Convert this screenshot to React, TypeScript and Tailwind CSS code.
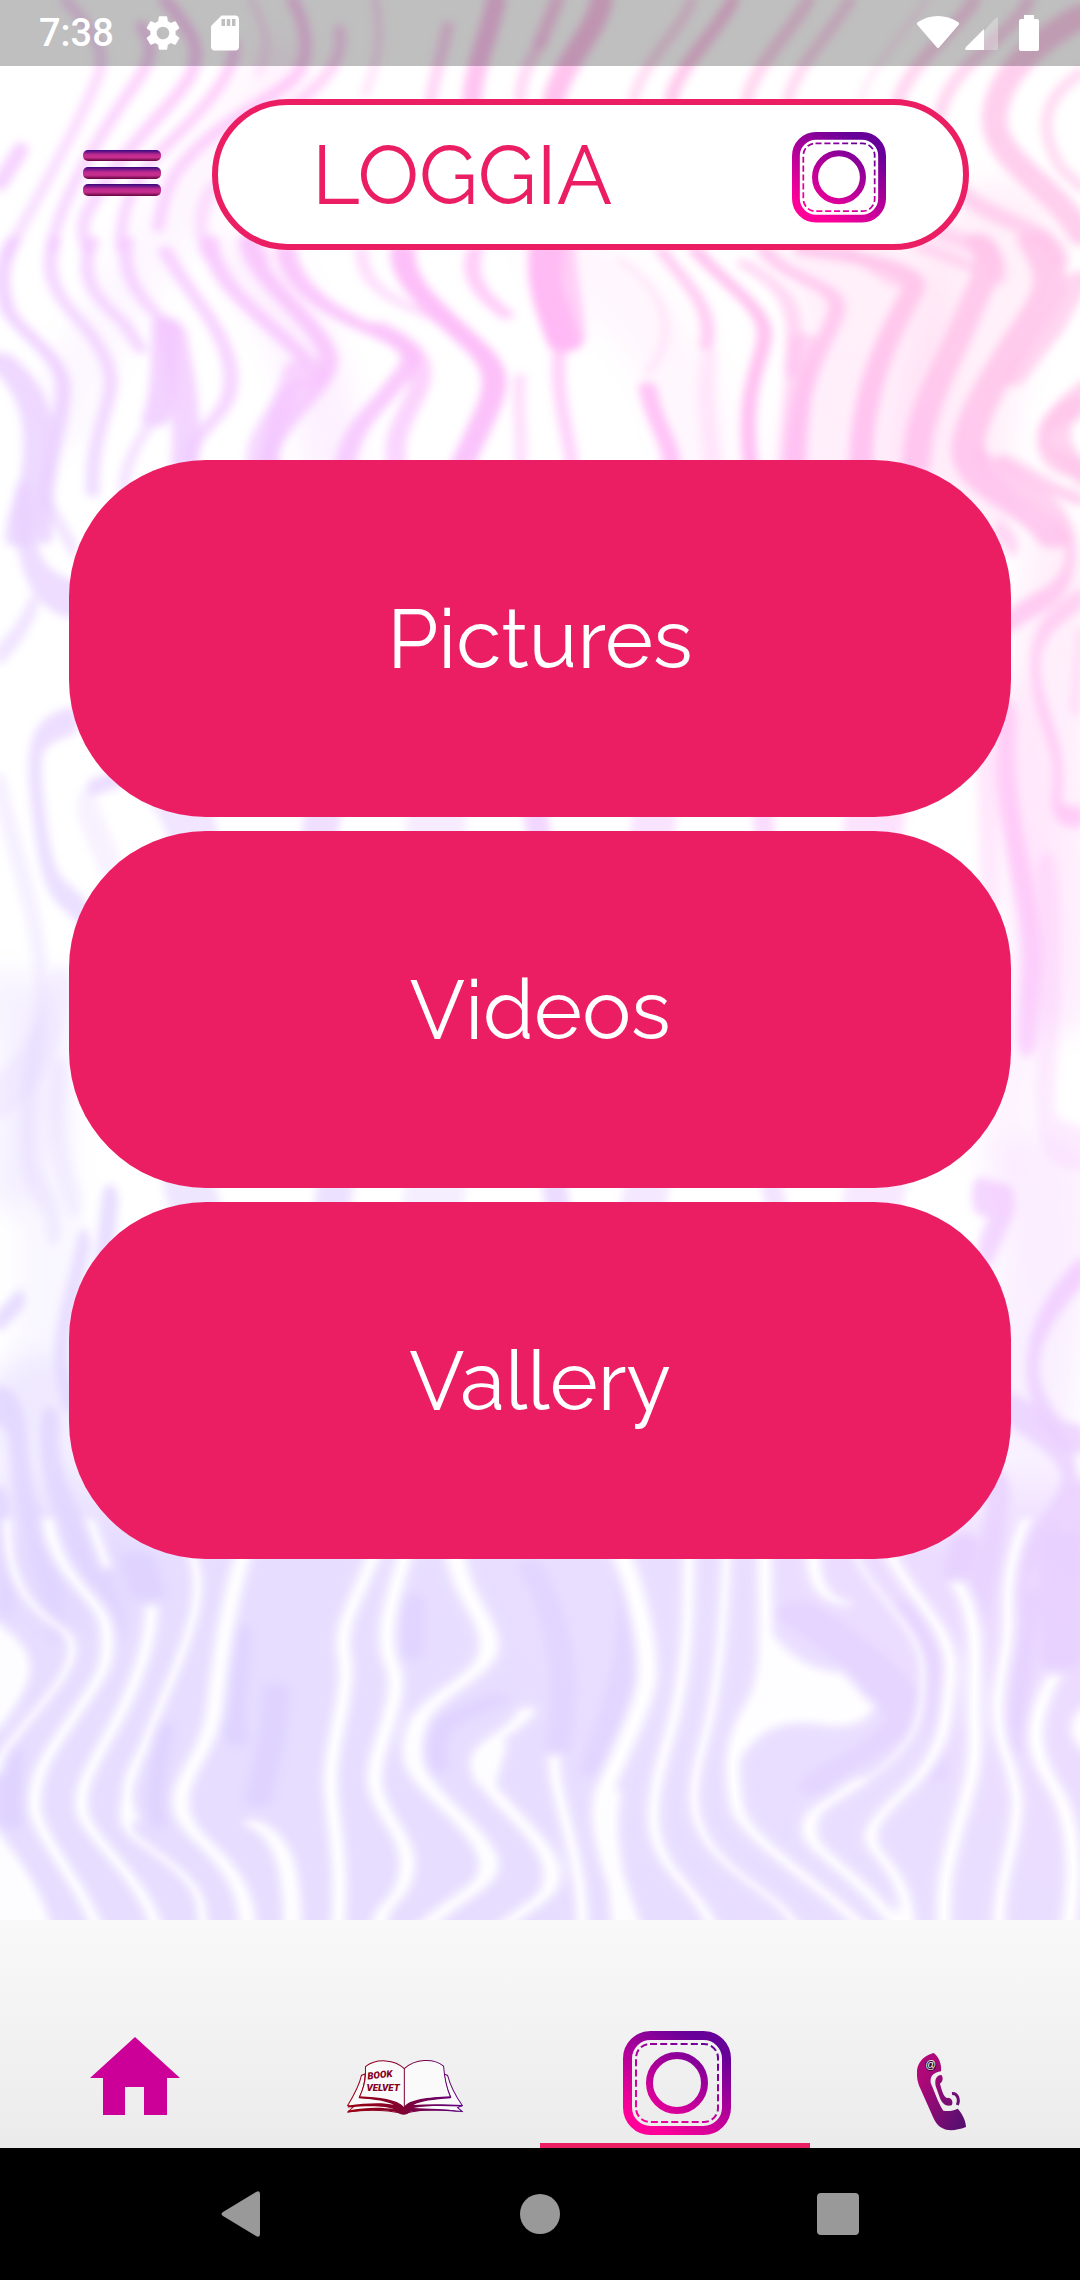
import React from "react";
import { MdSdCard, MdSettings } from "react-icons/md";

type Band = [d: string, width: number, opacity?: number];

const washes: Band[] = [
  ["M250 260 C300 320 330 400 330 460", 60, 0.25],
  ["M280 70 C230 170 120 260 60 420", 60, 0.15],
  ["M560 250 C640 300 700 380 700 470", 70, 0.12],
  ["M850 230 C900 330 870 400 850 470", 150, 0.25],
  ["M1000 240 C980 330 940 400 960 500", 120, 0.25],
  ["M1060 560 C1040 700 1060 860 1060 1000", 70, 0.25],
  ["M1010 700 C1030 850 1040 1000 1000 1150", 50, 0.2],
  ["M1040 1180 C1060 1300 1000 1400 1040 1560", 90, 0.3],
  ["M10 1000 C40 1060 30 1120 10 1180", 60, 0.3],
  ["M60 1000 C20 1160 80 1280 30 1400", 60, 0.2],
  ["M40 1420 C70 1460 60 1500 80 1560", 130, 0.4],
];

const topLeft: Band[] = [
  ["M190 0 C240 60 310 130 290 210 S130 560 20 760", 32, 0.6],
  ["M410 80 C450 130 440 180 400 240 S180 560 150 740", 34, 0.7],
  ["M480 0 C540 80 590 130 560 210 S400 400 310 540 S240 680 250 740", 38, 0.7],
  ["M680 130 C690 220 580 340 480 440 S350 640 350 740", 34, 0.7],
  ["M850 0 C890 80 900 150 870 210 S700 330 600 420 S480 560 460 680", 36, 0.7],
  ["M985 90 C1000 170 960 230 850 320", 34, 0.6],
  ["M730 0 C770 80 790 140 750 220", 24, 0.35],
  ["M1090 0 C1110 100 1100 180 1060 280", 26, 0.4],
  ["M1300 80 C1280 180 1260 240 1250 300", 34, 0.65],
  ["M1440 0 C1430 80 1380 180 1370 300", 56, 0.9],
  ["M1568 130 C1530 200 1510 240 1510 300", 34, 0.6],
  ["M0 550 L60 450", 46, 0.8],
  ["M620 560 C570 640 580 700 600 760", 40, 0.5],
  ["M730 690 L770 780", 30, 0.5],
];

const topRight: Band[] = [
  ["M50 0 L0 130", 40, 0.8],
  ["M180 0 C160 100 70 180 40 300", 64, 0.95],
  ["M440 0 C420 80 300 180 270 300", 30, 0.6],
  ["M560 0 C520 90 400 200 380 300", 38, 0.9],
  ["M780 0 C740 80 620 200 600 300", 36, 0.7],
  ["M900 0 C860 80 740 200 720 300", 32, 0.65],
  ["M1120 0 C1060 100 960 200 930 300", 16, 0.4],
  ["M1260 0 C1220 80 1080 180 1040 300", 38, 0.7],
  ["M1420 0 C1380 100 1180 200 1160 350", 36, 0.7],
  ["M1568 50 C1450 120 1330 220 1320 350 S1500 560 1568 700", 74, 0.8],
  ["M1568 220 C1500 270 1450 330 1480 430 S1540 520 1568 560", 34, 0.6],
  ["M1230 580 C1300 660 1500 690 1510 780", 50, 0.7],
  ["M1150 690 C1250 740 1340 750 1330 830", 50, 0.6],
];

const upper: Band[] = [
  ["M20 0 C0 80 0 130 10 200 S90 340 92 440 S60 700 65 900", 22, 0.85],
  ["M0 360 C50 450 60 540 55 660 S30 800 30 900", 44, 0.8],
  ["M80 0 C65 80 75 150 110 230 S165 380 160 450 S130 620 135 760", 20, 0.75],
  ["M135 0 C115 100 130 160 180 250 L205 330", 20, 0.75],
  ["M185 0 C175 100 200 170 240 250", 20, 0.75],
  ["M240 250 C240 340 240 480 225 540", 40, 0.85],
  ["M250 270 C262 400 275 520 268 680", 40, 0.8],
  ["M240 30 C260 130 330 260 335 400 S285 540 275 660", 22, 0.75],
  ["M215 560 C190 640 180 690 180 760", 16, 0.6],
  ["M305 0 C310 130 370 210 430 330 S440 400 420 460 S390 600 395 680", 26, 0.8],
  ["M360 0 C370 130 460 240 475 340 S400 520 385 680", 28, 0.85],
  ["M430 380 C410 540 370 560 375 680", 34, 0.7],
  ["M415 30 C420 120 460 200 540 270 S600 360 570 440 S510 560 500 680", 30, 0.85],
  ["M550 260 C620 330 620 400 600 480 S570 600 575 680", 30, 0.7],
  ["M525 30 C525 130 560 180 640 240", 20, 0.5],
  ["M585 30 C580 130 640 220 690 320 S715 470 670 680", 36, 0.95],
  ["M690 30 C675 110 700 170 735 225", 24, 0.7],
  ["M795 0 C785 120 800 200 820 310", 50, 1],
  ["M825 0 C825 120 840 200 840 300", 20, 0.7],
  ["M815 300 C800 450 830 600 830 680", 20, 0.65],
  ["M755 410 C750 500 760 600 755 680", 18, 0.5],
  ["M900 60 C980 180 980 300 940 400", 14, 0.3],
  ["M940 440 C950 560 975 600 975 680", 26, 0.85],
  ["M960 30 C990 120 1040 200 1025 320", 20, 0.75],
  ["M1030 340 C1020 460 1030 560 1035 680", 26, 0.3],
  ["M1010 30 C1050 130 1110 200 1110 280 S1075 430 1090 680", 22, 0.95],
  ["M1080 70 C1150 160 1160 200 1150 400", 24, 0.6],
  ["M1110 30 C1140 120 1215 130 1215 200 S1150 400 1155 680", 26, 0.8],
  ["M1165 300 L1150 680", 40, 0.6],
  ["M1170 30 C1240 50 1340 80 1325 150 S1250 400 1250 680", 34, 0.9],
  ["M1230 30 L1300 130", 22, 0.6],
  ["M1420 0 C1450 60 1430 100 1400 250 S1330 520 1330 680", 40, 0.85],
  ["M1340 20 L1410 80", 30, 0.6],
  ["M1500 0 C1530 100 1530 130 1510 200 S1400 520 1405 640 S1500 800 1530 900", 48, 0.85],
  ["M1568 110 L1530 260 L1470 420", 34, 0.7],
  ["M1600 420 C1510 540 1510 640 1600 720", 44, 0.75],
  ["M1455 660 C1500 740 1540 760 1568 780", 20, 0.5],
];

const leftEdge: Band[] = [
  ["M70 0 C70 90 120 130 210 140", 56, 0.75],
  ["M140 0 L220 70", 26, 0.6],
  ["M100 150 C60 190 40 200 0 220", 30, 0.6],
  ["M215 315 C100 330 90 350 120 460 S180 550 250 590", 40, 0.75],
  ["M370 395 L275 410", 24, 0.8],
  ["M260 440 L330 520", 60, 0.3],
  ["M0 410 C40 500 100 570 120 660 S80 800 80 900 S160 980 160 1040", 44, 0.35],
  ["M0 850 C60 830 150 780 180 700", 70, 0.3],
  ["M180 820 C160 900 190 960 220 1000", 50, 0.3],
  ["M0 1170 L60 1140", 30, 0.8],
  ["M330 1000 L310 1090", 50, 0.8],
  ["M250 1060 C220 1150 150 1200 205 1280", 42, 0.75],
  ["M0 1290 C80 1300 40 1380 90 1450 S150 1540 170 1600", 56, 0.8],
  ["M150 1320 C130 1400 240 1480 350 1600", 56, 0.8],
  ["M0 1430 L20 1568", 50, 0.8],
];

const rightEdge: Band[] = [
  ["M0 70 C40 110 260 120 270 190 S160 260 90 290", 30, 0.75],
  ["M60 80 C150 90 220 120 300 130", 20, 0.6],
  ["M300 10 C200 20 160 50 200 70 S280 80 300 100", 30, 0.7],
  ["M60 170 L100 190", 30, 0.6],
  ["M300 260 C200 290 150 310 170 370 S250 450 230 520 Q220 545 300 545", 28, 0.65],
  ["M300 310 L285 400", 30, 0.4],
  ["M80 420 C60 560 160 640 155 740 L140 830", 58, 0.65],
  ["M20 480 L30 640", 60, 0.3],
  ["M200 620 C240 760 180 900 200 940 S260 970 300 980", 60, 0.3],
  ["M0 1040 L80 1050 L20 1110", 50, 0.75],
  ["M300 1140 C190 1190 120 1250 180 1310 S280 1350 300 1360", 38, 0.8],
  ["M100 1320 C200 1350 310 1380 250 1440 S110 1500 110 1568", 46, 0.8],
  ["M20 1410 L60 1430 L0 1568", 60, 0.8],
  ["M300 1440 L260 1568", 60, 0.8],
];

const gaps: Band[] = [
  ["M160 780 C220 830 180 900 210 960 S150 1100 200 1220", 50, 0.6],
  ["M330 790 C290 900 370 1000 330 1220", 36, 0.7],
  ["M440 790 C420 900 470 1000 430 1220", 60, 0.4],
  ["M530 790 C560 900 520 1000 560 1220", 24, 0.8],
  ["M660 790 C630 900 690 1000 640 1220", 44, 0.5],
  ["M760 790 C780 900 720 1000 780 1220", 20, 0.6],
  ["M880 790 C850 900 910 1000 870 1220", 60, 0.45],
];

const shades: Band[] = [
  ["M345 270 C350 400 330 500 345 600", 36],
  ["M400 450 C400 600 380 720 375 780", 40],
  ["M600 180 L600 340", 34],
  ["M720 480 C640 540 620 580 632 680", 40],
  ["M770 80 C830 300 820 500 810 620", 36],
  ["M910 100 C930 350 880 560 860 690", 36],
  ["M240 560 C230 700 220 760 230 850", 26],
  ["M15 640 L15 850", 36],
  ["M200 60 L215 160", 50],
  ["M1180 740 C1190 700 1270 640 1310 540", 44],
  ["M1160 220 C1220 300 1280 400 1310 500", 70],
  ["M1310 200 C1380 400 1360 620 1360 710", 30],
  ["M1540 0 L1540 360", 60],
  ["M1500 160 L1470 640", 24],
  ["M1400 0 L1390 110", 40],
];

const whites: Band[] = [
  ["M10 -60 C10 120 40 200 85 260 S90 420 50 520 S0 640 -5 700", 22],
  ["M70 -60 C80 120 150 170 155 270 S150 400 110 520 S50 700 50 790 S110 1000 145 1180", 30],
  ["M130 -60 L155 80", 24],
  ["M220 200 C220 300 200 420 170 540 S110 740 120 820 S220 1040 228 1180", 30],
  ["M210 620 C180 720 180 780 195 840", 26],
  ["M275 20 C300 140 280 250 260 360 S200 640 185 760 S190 880 240 960 S295 1080 295 1180", 24],
  ["M355 30 C330 200 320 350 312 500 S250 720 265 820 S360 960 360 1180", 36],
  ["M368 850 C410 890 425 980 425 1180", 38],
  ["M545 30 C520 180 490 250 500 350 S480 600 480 720 S500 940 490 1180", 32],
  ["M590 30 C570 180 550 280 570 380 S535 640 545 740 S600 900 590 1000 S550 1080 550 1180", 34],
  ["M660 30 C670 180 710 230 710 320 S620 460 605 560 S600 700 650 800 S720 960 705 1010 S640 1100 610 1180", 40],
  ["M765 510 C750 580 690 600 695 680 S790 880 800 980 S770 1080 720 1180", 36],
  ["M718 620 L704 720", 46],
  ["M805 650 C800 760 850 960 845 1180", 28],
  ["M900 30 C930 180 940 320 940 400 S900 640 880 740 S890 1000 920 1180", 40],
  ["M890 760 C875 900 900 1000 900 1180", 36],
  ["M1000 30 C1000 200 1000 400 970 600 S940 900 980 1000 S1020 1100 1040 1180", 28],
  ["M1055 30 C1050 300 1040 480 1020 620 S1000 860 1050 960 S1140 1080 1160 1180", 24],
  ["M1110 30 C1110 300 1120 400 1090 500 S1060 700 1070 800 S1200 1040 1260 1180", 32],
  ["M1180 30 C1180 140 1200 180 1225 190", 32],
  ["M1240 30 C1260 160 1340 260 1340 400 S1330 620 1250 730", 16],
  ["M1250 720 C1200 800 1175 800 1175 870 S1240 980 1310 1180", 34],
  ["M1290 30 C1320 180 1385 260 1380 400 S1370 640 1320 740 S1250 880 1275 940 S1320 1060 1320 1180", 30],
  ["M1390 130 C1430 260 1410 420 1415 560 S1400 780 1385 900 S1370 1040 1370 1180", 32],
  ["M1490 -60 C1450 120 1470 220 1460 330 S1440 520 1460 640 S1480 800 1470 900 S1450 1050 1450 1180", 28],
  ["M1530 410 C1490 560 1500 640 1530 740 S1565 1000 1550 1180", 34],
];

function Bands({ items, transform, stroke }: { items: Band[]; transform?: string; stroke: string }) {
  return (
    <g transform={transform} fill="none" stroke={stroke} strokeLinecap="round" strokeLinejoin="round">
      {items.map(([d, width, opacity = 1]) => (
        <path key={d} d={d} strokeWidth={width} opacity={opacity} />
      ))}
    </g>
  );
}

/* The bands are drawn in several local grids; one page-wide gradient tints them all through a mask. */
function MarbleBackground() {
  return (
    <svg
      className="absolute inset-0 h-full w-full"
      viewBox="0 0 1080 1920"
      preserveAspectRatio="xMidYMin slice"
      aria-hidden="true"
    >
      <defs>
        <linearGradient id="tint" gradientUnits="userSpaceOnUse" x1="100" y1="1500" x2="1100" y2="500">
          <stop offset="0" stopColor="#e0d4ff" />
          <stop offset="0.25" stopColor="#e4d6ff" />
          <stop offset="0.5" stopColor="#ead0ff" />
          <stop offset="0.65" stopColor="#f6c6ff" />
          <stop offset="0.8" stopColor="#ffb9f6" />
          <stop offset="1" stopColor="#ffc4ea" />
        </linearGradient>
        <linearGradient id="fadeIn" x1="0" y1="0" x2="0" y2="1">
          <stop offset="0" stopColor="#fff" stopOpacity="0" />
          <stop offset="0.2" stopColor="#fff" stopOpacity="0.8" />
          <stop offset="1" stopColor="#fff" stopOpacity="0.8" />
        </linearGradient>
        <filter id="soft" filterUnits="userSpaceOnUse" x="-20" y="-20" width="1120" height="1980">
          <feGaussianBlur stdDeviation="4" />
        </filter>
        <filter id="softer" filterUnits="userSpaceOnUse" x="-20" y="-20" width="1120" height="1980">
          <feGaussianBlur stdDeviation="14" />
        </filter>
        <mask id="marble" maskUnits="userSpaceOnUse" x="-20" y="-20" width="1120" height="1980">
          <g filter="url(#softer)">
            <Bands items={washes} stroke="#fff" />
          </g>
          <g filter="url(#soft)">
            <Bands items={topLeft} stroke="#fff" transform="scale(0.3444 0.3333)" />
            <Bands items={topRight} stroke="#fff" transform="translate(540 0) scale(0.3444 0.3333)" />
            <Bands items={upper} stroke="#fff" transform="translate(0 240) scale(0.6888 0.3333)" />
            <Bands items={gaps} stroke="#fff" />
            <Bands items={leftEdge} stroke="#fff" transform="translate(0 500) scale(0.3333 0.7015)" />
            <Bands items={rightEdge} stroke="#fff" transform="translate(980 400) scale(0.3333 0.7653)" />
            <rect x="-20" y="1460" width="1120" height="480" fill="url(#fadeIn)" />
            <Bands items={shades} stroke="#fff" transform="translate(0 1540) scale(0.6888 0.3333)" />
            <g transform="translate(0 1540) scale(0.6888 0.3333)">
              <Bands items={whites} stroke="#0c0c0c" />
              <path
                fill="#0c0c0c"
                d="M-30 200 L0 240 C60 330 70 400 0 580 L-30 580Z M-30 800 L0 860 C30 950 70 1040 85 1200 L-30 1200Z M1120 260 C1150 340 1180 380 1220 385 C1240 400 1250 460 1275 490 C1270 560 1230 580 1190 565 C1140 550 1110 570 1080 660 L1085 480 C1120 400 1110 320 1120 260Z M1600 460 C1535 500 1530 620 1600 680Z"
              />
            </g>
          </g>
        </mask>
      </defs>
      <rect width="1080" height="1920" fill="#fff" />
      <rect width="1080" height="1920" fill="url(#tint)" mask="url(#marble)" />
    </svg>
  );
}

function CameraIcon({ id, className }: { id: string; className: string }) {
  const paint = `url(#${id})`;
  return (
    <svg viewBox="0 0 108 104" className={className} fill="none" aria-hidden="true">
      <defs>
        <linearGradient id={id} gradientUnits="userSpaceOnUse" x1="30" y1="96" x2="82" y2="12">
          <stop offset="0" stopColor="#ff0099" />
          <stop offset="1" stopColor="#660099" />
        </linearGradient>
      </defs>
      <rect x="4.5" y="4.5" width="99" height="95" rx="23" stroke={paint} strokeWidth="9" />
      <rect x="13" y="13" width="82" height="78" rx="14" stroke={paint} strokeWidth="2" strokeDasharray="7 3.2" />
      <circle cx="54" cy="52" r="27.5" stroke={paint} strokeWidth="7" />
    </svg>
  );
}

function MenuIcon() {
  return (
    <svg viewBox="0 0 78 46" className="w-[78px]" aria-hidden="true">
      <defs>
        <linearGradient id="bar" x1="0.48" y1="0" x2="0.52" y2="1" gradientTransform="rotate(3)">
          <stop offset="0" stopColor="#3d0a80" />
          <stop offset="0.4" stopColor="#c02a90" />
          <stop offset="0.65" stopColor="#c8308f" />
          <stop offset="1" stopColor="#5a0038" />
        </linearGradient>
      </defs>
      <rect y="0" width="78" height="11" rx="5" fill="url(#bar)" />
      <rect y="17" width="78" height="12" rx="5" fill="url(#bar)" />
      <rect y="34" width="78" height="12" rx="5" fill="url(#bar)" />
    </svg>
  );
}

function HomeIcon() {
  return (
    <svg viewBox="0 0 90 78" className="w-[90px]" aria-hidden="true">
      <path fill="#cc0099" d="M45 0 L90 41 H77 V78 H54 V50 H35 V78 H13 V41 H0Z" />
    </svg>
  );
}

function BookIcon() {
  return (
    <svg viewBox="52 94 346 164" className="w-[116px]" fill="none" stroke="url(#ink)" strokeWidth="3" aria-hidden="true">
      <defs>
        <linearGradient id="ink" gradientUnits="userSpaceOnUse" x1="60" y1="0" x2="398" y2="0">
          <stop offset="0" stopColor="#990011" />
          <stop offset="0.4" stopColor="#85002a" />
          <stop offset="1" stopColor="#5c0085" />
        </linearGradient>
      </defs>
      <path
        fill="#fafafa"
        d="M105 136 L95 140 C90 165 75 195 54 230 L70 235 L54 249 C120 240 180 245 222 254 C270 240 330 240 396 248 L382 236 L396 230 C375 200 360 170 352 140 L342 136 C345 165 352 185 361 205 C310 206 250 212 223 240 C195 215 150 208 89 206 C100 185 105 160 106 136Z"
      />
      <path
        fill="#fafafa"
        d="M223 120 C195 92 140 88 107 114 V140 C106 165 98 185 89 205 C150 208 195 215 223 245 C250 212 310 206 361 205 C350 180 343 150 340 112 C310 88 255 90 223 120Z"
      />
      <path d="M223 120 V240" />
      <path
        fill="url(#ink)"
        stroke="none"
        d="M88 202 C150 206 200 210 222 234 C240 210 290 206 361 202 L361 208 C310 212 270 216 250 228 C300 224 350 226 396 228 L396 233 C340 231 290 230 250 237 C290 239 350 239 397 249 C340 245 280 244 242 248 C232 260 212 260 202 250 C160 241 110 243 54 251 L56 245 C110 234 160 235 192 241 C170 230 110 230 54 236 L56 230 C110 222 160 220 192 228 C170 216 140 212 88 208Z"
      />
      <g fill="#85001f" stroke="none" fontFamily="Roboto, sans-serif" fontWeight="900" fontStyle="italic">
        <text x="114" y="152" fontSize="29" transform="rotate(-6 114 152)">BOOK</text>
        <text x="110" y="188" fontSize="29">VELVET</text>
      </g>
    </svg>
  );
}

function PhoneIcon() {
  return (
    <svg viewBox="951 126 147 234" className="w-[49px]" aria-hidden="true">
      <defs>
        <linearGradient id="phone" gradientUnits="userSpaceOnUse" x1="955" y1="220" x2="1098" y2="300">
          <stop offset="0" stopColor="#b00878" />
          <stop offset="1" stopColor="#5a0f70" />
        </linearGradient>
      </defs>
      <path
        fill="url(#phone)"
        d="M1001 126 C985 130 951 145 951 185 C950 205 955 220 962 235 L1000 320 C1015 355 1045 368 1098 348 C1098 335 1090 310 1073 293 C1060 300 1045 301 1030 299 C1020 285 1010 260 992 215 C990 195 1000 185 1023 181 C1026 160 1015 135 1001 126Z"
      />
      <path
        fill="url(#phone)"
        d="M1018 193 C1005 198 1004 215 1008 228 L1020 262 C1028 280 1040 288 1055 283 C1060 275 1057 262 1045 260 C1036 264 1028 250 1020 218 C1030 212 1030 198 1024 192Z"
      />
      <path fill="none" stroke="url(#phone)" strokeWidth="9" d="M1056 248 C1070 246 1080 262 1072 282" />
      <circle cx="992" cy="163" r="17" fill="#3a0a30" />
      <text
        x="992"
        y="172"
        textAnchor="middle"
        fill="#fff"
        fontSize="32"
        fontFamily="'Liberation Sans', sans-serif"
      >
        @
      </text>
    </svg>
  );
}

function StatusBar() {
  return (
    <div className="flex h-[66px] items-center justify-between bg-black/25 pr-[41px] pl-[39px] text-white">
      <div className="flex items-center">
        <time className="font-['Roboto',sans-serif] text-[38px] leading-none font-medium">7:38</time>
        <MdSettings className="ml-7 size-[42px]" />
        <MdSdCard className="ml-5 size-[42px]" />
      </div>
      <svg viewBox="0 0 122 36" className="w-[122px]" fill="currentColor" aria-hidden="true">
        <path d="M1 7 C13 -1 29 -1 41 7 Q43 8 41.5 10 L22.5 32 Q21 34 19.5 32 L0.5 10 Q-1 8 1 7Z" />
        <path opacity="0.3" d="M67 16 L77.5 4 Q81 0.5 81 4 V33 Q81 35 79 35 H67Z" />
        <path d="M67 14 V35 H50 Q46.5 35 49 32Z" />
        <path d="M107 0 H117 V4 H120 Q122 4 122 6 V34 Q122 36 120 36 H104 Q102 36 102 34 V6 Q102 4 104 4 H107Z" />
      </svg>
    </div>
  );
}

const sections = ["Pictures", "Videos", "Vallery"];

const tabs = [
  { label: "Home", icon: <HomeIcon />, place: "border-transparent pb-7" },
  { label: "Book Velvet", icon: <BookIcon />, place: "border-transparent pb-7" },
  {
    label: "Loggia",
    icon: <CameraIcon id="tabCamera" className="w-[108px]" />,
    place: "border-[#eb1e63] pb-2 pl-1",
    active: true,
  },
  { label: "Contact", icon: <PhoneIcon />, place: "border-transparent pr-2 pb-3" },
];

export default function App() {
  return (
    <div className="flex min-h-screen flex-col bg-white font-['Raleway','Lato',sans-serif]">
      <div className="relative flex flex-1 flex-col overflow-hidden">
        <MarbleBackground />
        <div className="relative">
          <StatusBar />
          <header className="flex items-center pt-[33px] pr-[111px] pl-[83px]">
            <button type="button" aria-label="Menu" className="pb-1 mr-[51px]">
              <MenuIcon />
            </button>
            <div className="flex h-[151px] flex-1 items-center justify-between rounded-full border-[6px] border-[#eb1e63] bg-white pr-[77px] pl-[94px]">
              <h1 className="text-[82px] leading-none font-normal text-[#eb1e63]">LOGGIA</h1>
              <CameraIcon id="headerCamera" className="mt-[6px] w-[94px]" />
            </div>
          </header>
          <main className="flex flex-col gap-[14px] px-[69px] pt-[210px] pb-20">
            {sections.map((name) => (
              <button
                key={name}
                type="button"
                className="h-[357px] rounded-[137px] bg-[#eb1e63] text-[82px] leading-none font-normal text-white"
              >
                {name}
              </button>
            ))}
          </main>
        </div>
      </div>

      <nav className="grid h-[228px] grid-cols-4 bg-linear-to-b from-[#f9f9f9] to-[#ebebeb]">
        {tabs.map(({ label, icon, place, active }) => (
          <a
            key={label}
            href="#"
            aria-label={label}
            aria-current={active ? "page" : undefined}
            className={`flex items-end justify-center border-b-[5px] ${place}`}
          >
            {icon}
          </a>
        ))}
      </nav>

      <div className="grid h-[132px] grid-cols-[1fr_78px_1fr] items-center bg-black px-[221px]">
        <button type="button" aria-label="Back" className="justify-self-start">
          <svg viewBox="0 0 40 46" className="w-10" aria-hidden="true">
            <path fill="#999" d="M2 21 L35 1 Q39 -1 39 3 V43 Q39 47 35 45 L2 25 Q-1 23 2 21Z" />
          </svg>
        </button>
        <button type="button" aria-label="Home screen" className="size-10 justify-self-center rounded-full bg-[#999]" />
        <button type="button" aria-label="Recent apps" className="size-[42px] justify-self-end rounded bg-[#999]" />
      </div>
    </div>
  );
}
